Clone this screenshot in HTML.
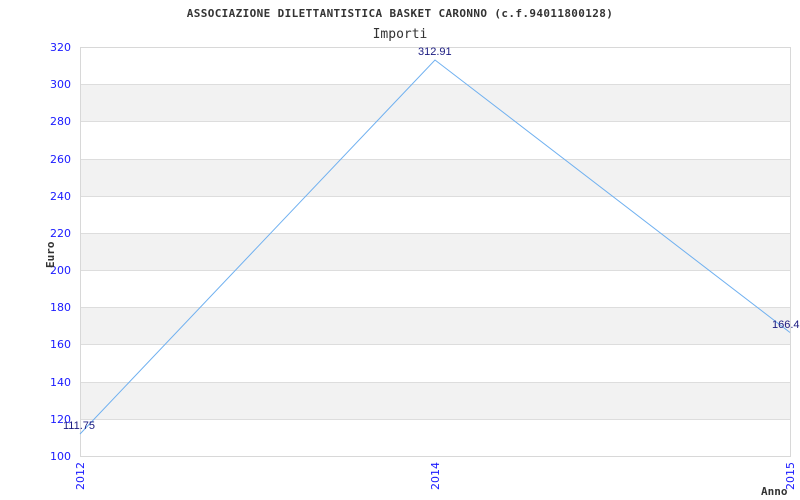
<!DOCTYPE html>
<html><head><meta charset="utf-8"><style>
html,body{margin:0;padding:0;background:#fff;width:800px;height:500px;overflow:hidden}
svg{display:block}
</style></head><body>
<svg width="800" height="500" xmlns="http://www.w3.org/2000/svg">
<rect width="800" height="500" fill="#fff"/>
<text x="400" y="17" text-anchor="middle" letter-spacing="0.37" font-family="DejaVu Sans Mono, Liberation Mono, monospace" font-size="11" font-weight="bold" fill="#333">ASSOCIAZIONE DILETTANTISTICA BASKET CARONNO (c.f.94011800128)</text>
<text x="400" y="38" text-anchor="middle" font-family="DejaVu Sans Mono, Liberation Mono, monospace" font-size="13" fill="#333">Importi</text>
<g fill="#f2f2f2">
<rect x="80" y="84" width="710" height="37"/>
<rect x="80" y="159" width="710" height="37"/>
<rect x="80" y="233" width="710" height="37"/>
<rect x="80" y="307" width="710" height="37"/>
<rect x="80" y="382" width="710" height="37"/>
</g>
<g stroke="#ddd" stroke-width="1">
<line x1="80" y1="84.5" x2="790" y2="84.5"/>
<line x1="80" y1="121.5" x2="790" y2="121.5"/>
<line x1="80" y1="159.5" x2="790" y2="159.5"/>
<line x1="80" y1="196.5" x2="790" y2="196.5"/>
<line x1="80" y1="233.5" x2="790" y2="233.5"/>
<line x1="80" y1="270.5" x2="790" y2="270.5"/>
<line x1="80" y1="307.5" x2="790" y2="307.5"/>
<line x1="80" y1="344.5" x2="790" y2="344.5"/>
<line x1="80" y1="382.5" x2="790" y2="382.5"/>
<line x1="80" y1="419.5" x2="790" y2="419.5"/>
</g>
<rect x="80.5" y="47.5" width="710" height="409" fill="none" stroke="#d8d8d8"/>
<g font-family="DejaVu Sans, Liberation Sans, sans-serif" font-size="11" fill="#1a1aff" text-anchor="end">
<text x="71" y="51">320</text>
<text x="71" y="88">300</text>
<text x="71" y="125">280</text>
<text x="71" y="163">260</text>
<text x="71" y="200">240</text>
<text x="71" y="237">220</text>
<text x="71" y="274">200</text>
<text x="71" y="311">180</text>
<text x="71" y="348">160</text>
<text x="71" y="386">140</text>
<text x="71" y="423">120</text>
<text x="71" y="460">100</text>
</g>
<g font-family="DejaVu Sans, Liberation Sans, sans-serif" font-size="11" fill="#1a1aff" text-anchor="end">
<text transform="translate(84,462) rotate(-90)">2012</text>
<text transform="translate(439,462) rotate(-90)">2014</text>
<text transform="translate(794,462) rotate(-90)">2015</text>
</g>
<text transform="translate(54,268) rotate(-90)" font-family="DejaVu Sans Mono, monospace" font-size="11" font-weight="bold" fill="#333">Euro</text>
<text x="761" y="495" font-family="DejaVu Sans Mono, monospace" font-size="11" font-weight="bold" fill="#333">Anno</text>
<polyline points="80,434 435,60 790,332.5" fill="none" stroke="#6fb0f0" stroke-width="1"/>
<g font-family="Liberation Sans, sans-serif" font-size="11" fill="#1a1a80">
<text x="63" y="429">111.75</text>
<text x="418" y="55">312.91</text>
<text x="772" y="328">166.43</text>
</g>
</svg>
</body></html>
